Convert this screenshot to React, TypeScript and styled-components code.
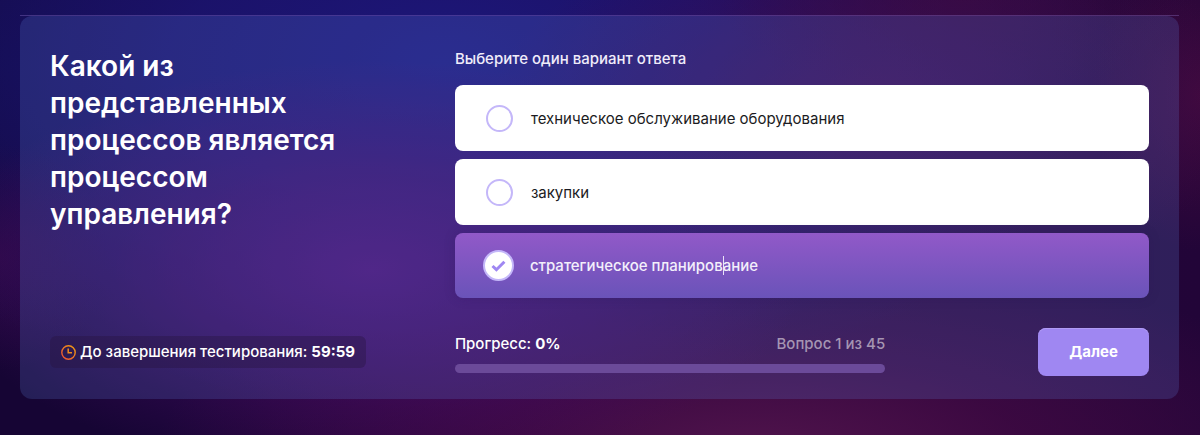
import React, { useState } from "react";
import styled, { createGlobalStyle, css } from "styled-components";

const GlobalStyle = createGlobalStyle`
  *, *::before, *::after { box-sizing: border-box; }
  body {
    margin: 0;
    background: #190634;
    color: #fff;
    font-family: Inter, "Noto Sans", sans-serif;
    font-size: 15px;
    line-height: 24px;
  }
`;

const Page = styled.main`
  min-height: 100vh;
  padding: 15px 21px 36px 20px;
  background:
    radial-gradient(36% 48% at 31% 62%, rgba(80, 15, 116, 0.9), rgba(76, 12, 106, 0.6) 45%, rgba(60, 10, 84, 0)),
    radial-gradient(32% 42% at 73% 24%, rgba(70, 13, 80, 0.8), rgba(68, 12, 80, 0.4) 50%, rgba(62, 12, 80, 0)),
    radial-gradient(50% 46% at 63% 104%, rgba(80, 20, 76, 1), rgba(68, 10, 68, 0.7) 45%, rgba(56, 8, 62, 0)),
    radial-gradient(9% 36% at 100% 22%, rgba(66, 10, 62, 0.9), rgba(60, 10, 62, 0)),
    radial-gradient(9% 26% at 0% 59%, rgba(48, 10, 74, 0.8), rgba(48, 10, 74, 0)),
    radial-gradient(20% 22% at 80% 0%, rgba(54, 10, 62, 0.8), rgba(54, 10, 62, 0)),
    radial-gradient(56% 80% at 37% 14%, rgba(28, 23, 122, 1), rgba(28, 20, 114, 0.85) 40%, rgba(26, 10, 80, 0)),
    radial-gradient(30% 60% at 0% 15%, rgba(15, 11, 68, 0.9), rgba(15, 11, 68, 0)),
    linear-gradient(90deg, #160534 20%, #28053c 60%, #220538);
`;

const Section = styled.section`
  border-top: 1px solid rgba(150, 120, 210, 0.35);
`;

const Card = styled.form`
  display: grid;
  grid-template-columns: minmax(0, 7fr) minmax(0, 12fr);
  row-gap: 30px;
  padding: 31px 30px 23px;
  border-radius: 12px;
  background: rgba(100, 134, 228, 0.2);
`;

const Question = styled.h1`
  margin: 0;
  padding: 1px 80px 0 0;
  font-size: 28px;
  line-height: 37px;
  font-weight: 600;
`;

const Answers = styled.fieldset`
  display: flex;
  flex-direction: column;
  gap: 8px;
  min-width: 0;
  margin: 0;
  padding: 0;
  border: 0;
`;

const Hint = styled.legend`
  padding: 0 0 14px;
  font-weight: 500;
  color: #f0ecfa;
`;

const Option = styled.label<{ $selected: boolean }>`
  display: flex;
  align-items: center;
  gap: 18px;
  height: 66px;
  padding: 0 31px;
  border-radius: 8px;
  background: #fff;
  color: #1b1b22;
  cursor: pointer;
  ${({ $selected }) =>
    $selected &&
    css`
      gap: 16px;
      height: 65px;
      padding: 0 28px;
      background: linear-gradient(#9159c8, #6a53b9);
      color: #f3effb;
      font-weight: 500;
      box-shadow: 0 0 12px rgba(40, 16, 80, 0.2);
    `}
`;

const RadioBox = styled.span`
  display: grid;
  place-items: center;

  > * {
    grid-area: 1 / 1;
  }
`;

const Radio = styled.input`
  appearance: none;
  width: 27px;
  height: 27px;
  margin: 0;
  border: 2px solid #c4b7f9;
  border-radius: 50%;
  background: #fff;

  &:checked {
    width: 31px;
    height: 31px;
  }
`;

const Check = styled.svg`
  pointer-events: none;
`;

const OptionText = styled.span`
  padding-top: 1px;
`;

const CaretAnchor = styled.span`
  position: relative;
`;

const Caret = styled.span`
  position: absolute;
  top: 0;
  left: 0;
  width: 1px;
  height: 19px;
  background: #e9e2f7;
`;

const TimerCell = styled.div`
  display: flex;
  align-items: center;
`;

const Timer = styled.p`
  display: flex;
  align-items: center;
  gap: 4px;
  margin: 0;
  padding: 4px 11px;
  border-radius: 6px;
  background: rgba(40, 20, 66, 0.4);
  font-weight: 500;
  white-space: pre;
`;

const Footer = styled.div`
  display: flex;
  align-items: center;
  justify-content: space-between;
`;

const Progress = styled.div`
  display: flex;
  flex-direction: column;
  gap: 8px;
  width: 62%;
`;

const ProgressLabels = styled.div`
  display: flex;
  justify-content: space-between;
  font-weight: 500;
`;

const Counter = styled.span`
  color: #a595b2;
`;

const Track = styled.div`
  height: 9px;
  border-radius: 5px;
  background: #6b4a99;
  overflow: hidden;
`;

const Fill = styled.div`
  height: 100%;
  background: #9f87f2;
`;

const NextButton = styled.button`
  height: 48px;
  padding: 0 31px;
  border: 0;
  border-radius: 8px;
  background: #9f87f2;
  box-shadow: inset 0 1px #b09bf5;
  color: #fff;
  font: inherit;
  font-weight: 700;
  cursor: pointer;
`;

const options = [
  ["техническое обслуживание оборудования"],
  ["закупки"],
  ["стратегическое планиров", "ание"],
];

function ClockIcon() {
  return (
    <svg width="15" height="15" viewBox="0 0 15 15" fill="none" aria-hidden="true">
      <defs>
        <linearGradient id="clock" x1="0" y1="1" x2="1" y2="0">
          <stop offset="0" stopColor="#ee4c36" />
          <stop offset="1" stopColor="#f0a010" />
        </linearGradient>
      </defs>
      <circle cx="7.5" cy="7.5" r="6.7" stroke="url(#clock)" strokeWidth="1.4" />
      <path d="M7.2 3.6V7.8H11" stroke="#f08a1c" strokeWidth="1.5" />
    </svg>
  );
}

export default function App() {
  const [selected, setSelected] = useState(2);
  const progress = 0;

  return (
    <>
      <GlobalStyle />
      <Page>
        <Section>
          <Card onSubmit={(e) => e.preventDefault()}>
            <Question>Какой из представленных процессов является процессом управления?</Question>
            <Answers>
              <Hint>Выберите один вариант ответа</Hint>
              {options.map(([text, rest], i) => (
                <Option key={text} $selected={selected === i}>
                  <RadioBox>
                    <Radio
                      type="radio"
                      name="answer"
                      checked={selected === i}
                      onChange={() => setSelected(i)}
                    />
                    {selected === i && (
                      <Check width="15" height="12" viewBox="0 0 15 12" fill="none" aria-hidden="true">
                        <path d="M1.5 6L5.4 9.7L13.4 1.8" stroke="#9f87f2" strokeWidth="3" />
                      </Check>
                    )}
                  </RadioBox>
                  <OptionText>
                    {text}
                    {rest && (
                      <CaretAnchor>
                        {rest}
                        <Caret />
                      </CaretAnchor>
                    )}
                  </OptionText>
                </Option>
              ))}
            </Answers>
            <TimerCell>
              <Timer>
                <ClockIcon />
                <span>
                  До завершения тестирования: <b>59:59</b>
                </span>
              </Timer>
            </TimerCell>
            <Footer>
              <Progress>
                <ProgressLabels>
                  <span>
                    Прогресс: <b>{progress}%</b>
                  </span>
                  <Counter>Вопрос 1 из 45</Counter>
                </ProgressLabels>
                <Track role="progressbar" aria-label="Прогресс" aria-valuenow={progress}>
                  <Fill style={{ width: `${progress}%` }} />
                </Track>
              </Progress>
              <NextButton type="submit">Далее</NextButton>
            </Footer>
          </Card>
        </Section>
      </Page>
    </>
  );
}
